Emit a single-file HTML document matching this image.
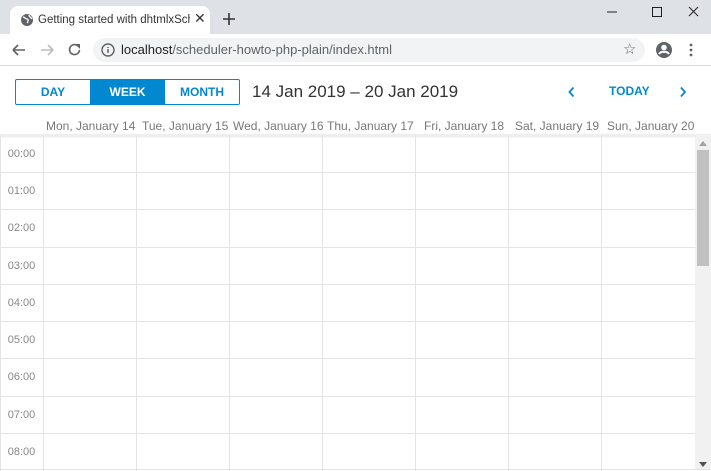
<!DOCTYPE html>
<html><head><meta charset="utf-8"><style>
*{margin:0;padding:0;box-sizing:border-box}
body{width:711px;height:471px;overflow:hidden;background:#fff;font-family:"Liberation Sans",sans-serif;position:relative}
.a{position:absolute}
.tabbar{left:0;top:0;width:711px;height:34px;background:#dee1e6}
.tab{left:10px;top:6px;width:200px;height:28px;background:#fff;border-radius:8px 8px 0 0;font-size:11.5px;color:#333;}
.toolbar{left:0;top:34px;width:711px;height:32px;background:#fff;border-bottom:1px solid #dadce0}
.addr{left:93px;top:38px;width:552px;height:24px;background:#f1f3f4;border-radius:12px;font-size:13px;color:#202124}
.btns{left:15px;top:79px;height:26px;width:225px;border:1px solid #0288d1;border-radius:2px;display:flex;font-size:12px;font-weight:bold;color:#0288d1}
.btns div{display:flex;align-items:center;justify-content:center}
.hdr{font-size:12px;color:#777;top:119px}
.vl{width:1px;background:#e4e4e4;top:135px;height:336px}
.hl{height:1px;background:#e4e4e4;left:0;width:695px}
.tm{left:0;width:43px;text-align:center;font-size:11px;color:#888}
</style></head><body>
<div class="a tabbar"></div>
<div class="a tab">
<svg class="a" style="left:10px;top:7px" width="14" height="14" viewBox="0 0 14 14"><circle cx="7" cy="7" r="6" fill="#5f6368"/><path d="M3 4c2 0 2 2 4 2s1 3 0 4M9 2c0 2 2 2 3 4" stroke="#fff" stroke-width="1.3" fill="none"/></svg>
<span class="a" style="left:28px;top:8px;white-space:nowrap;width:152px;overflow:hidden">Getting started with dhtmlxSchec</span>
<span class="a" style="left:184px;top:4px;font-size:14px;color:#333">✕</span>
</div>
<svg class="a" style="left:223px;top:13px" width="12" height="12"><path d="M6 0v12M0 6h12" stroke="#333" stroke-width="1.6"/></svg>
<svg class="a" style="left:604px;top:4px" width="100" height="16"><path d="M3 8h10" stroke="#222"/><path d="M48.5 3.5h9v9h-9z" stroke="#222" fill="none"/><path d="M85 3l9 9M94 3l-9 9" stroke="#222"/></svg>
<div class="a toolbar"></div>
<svg class="a" style="left:12px;top:43px" width="80" height="14"><path d="M1 7h12M1 7l5-5M1 7l5 5" stroke="#5f6368" stroke-width="1.6" fill="none"/><path d="M41 7h-12M41 7l-5-5M41 7l-5 5" stroke="#bbb" stroke-width="1.6" fill="none"/><path d="M66 3a5 5 0 1 0 1.5 4" stroke="#5f6368" stroke-width="1.6" fill="none"/><path d="M63 1h5v5z" fill="#5f6368"/></svg>
<div class="a addr"><svg class="a" style="left:8px;top:5px" width="14" height="14"><circle cx="7" cy="7" r="6" stroke="#5f6368" stroke-width="1.4" fill="none"/><path d="M7 6v4M7 4v1" stroke="#5f6368" stroke-width="1.5"/></svg><span class="a" style="left:28px;top:4px">localhost<span style="color:#5f6368">/scheduler-howto-php-plain/index.html</span></span>
<span class="a" style="left:530px;top:2px;font-size:15px;color:#5f6368">☆</span></div>
<svg class="a" style="left:655px;top:41px" width="40" height="18"><circle cx="9" cy="9" r="8" fill="#5f6368"/><circle cx="9" cy="6.5" r="2.8" fill="#fff"/><path d="M4 13c2-3 8-3 10 0" stroke="#fff" stroke-width="2" fill="none"/><circle cx="36" cy="4" r="1.4" fill="#5f6368"/><circle cx="36" cy="9" r="1.4" fill="#5f6368"/><circle cx="36" cy="14" r="1.4" fill="#5f6368"/></svg>
<div class="a btns"><div style="width:74px">DAY</div><div style="width:75px;background:#0288d1;color:#fff">WEEK</div><div style="flex:1">MONTH</div></div>
<div class="a" style="left:252px;top:82px;font-size:17px;color:#333">14 Jan 2019 – 20 Jan 2019</div>
<svg class="a" style="left:566px;top:86px" width="124" height="12"><path d="M7.5 1.5l-4 4.5 4 4.5" stroke="#0288d1" stroke-width="1.8" fill="none"/><path d="M115 1.5l4 4.5-4 4.5" stroke="#0288d1" stroke-width="1.8" fill="none"/></svg>
<div class="a" style="left:609px;top:84px;font-size:12px;font-weight:bold;color:#0288d1">TODAY</div>
<div class="a hdr" style="left:46px">Mon, January 14</div>
<div class="a hdr" style="left:142px">Tue, January 15</div>
<div class="a hdr" style="left:233px">Wed, January 16</div>
<div class="a hdr" style="left:327px">Thu, January 17</div>
<div class="a hdr" style="left:424px">Fri, January 18</div>
<div class="a hdr" style="left:515px">Sat, January 19</div>
<div class="a hdr" style="left:607px">Sun, January 20</div>
<div class="a" style="left:0;top:134px;width:711px;height:2px;background:#eee;box-shadow:0 1px 2px rgba(0,0,0,.1)"></div>
<div class="a vl" style="left:0"></div>
<div class="a vl" style="left:43px"></div>
<div class="a vl" style="left:136px"></div>
<div class="a vl" style="left:229px"></div>
<div class="a vl" style="left:322px"></div>
<div class="a vl" style="left:415px"></div>
<div class="a vl" style="left:508px"></div>
<div class="a vl" style="left:601px"></div>
<div class="a hl" style="top:172px"></div><div class="a hl" style="top:209px"></div><div class="a hl" style="top:247px"></div><div class="a hl" style="top:284px"></div><div class="a hl" style="top:321px"></div><div class="a hl" style="top:358px"></div><div class="a hl" style="top:396px"></div><div class="a hl" style="top:433px"></div><div class="a hl" style="top:469px;width:711px"></div>
<div class="a tm" style="top:148px">00:00</div><div class="a tm" style="top:185px">01:00</div><div class="a tm" style="top:222px">02:00</div><div class="a tm" style="top:260px">03:00</div><div class="a tm" style="top:297px">04:00</div><div class="a tm" style="top:334px">05:00</div><div class="a tm" style="top:371px">06:00</div><div class="a tm" style="top:409px">07:00</div><div class="a tm" style="top:446px">08:00</div>
<div class="a" style="left:695px;top:135px;width:16px;height:334px;background:#f1f1f1"></div>
<div class="a" style="left:697px;top:150px;width:12px;height:116px;background:#c1c1c1"></div>
<svg class="a" style="left:699px;top:141px" width="8" height="5"><path d="M0 5L4 0L8 5z" fill="#a3a3a3"/></svg>
<svg class="a" style="left:699px;top:462px" width="8" height="5"><path d="M0 0L8 0L4 5z" fill="#505050"/></svg>
</body></html>
